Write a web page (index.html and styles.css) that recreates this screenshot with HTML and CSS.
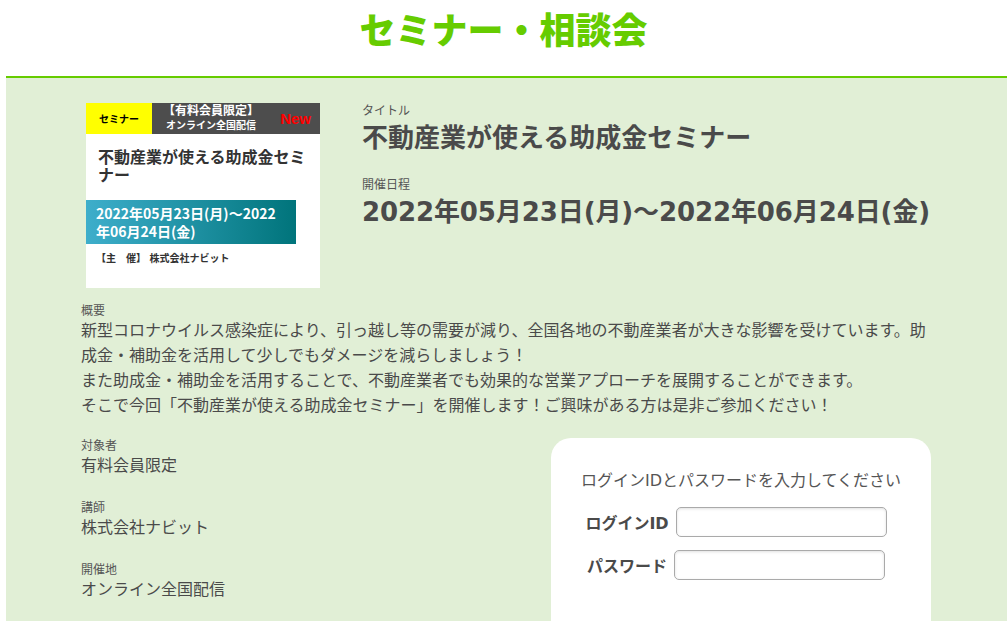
FILE: index.html
```html
<!DOCTYPE html>
<html lang="ja">
  <head>
    <meta charset="UTF-8" />
    <meta name="viewport" content="width=device-width, initial-scale=1.0" />
    <title>セミナー・相談会</title>
    <link rel="stylesheet" href="styles.css">
  </head>
  <body>
    <header class="page-head">
      <h1>セミナー・相談会</h1>
    </header>

    <main class="panel">
      <section class="summary">
        <div class="flyer">
          <div class="flyer-bar">
            <span class="flyer-kind">セミナー</span>
            <div class="flyer-info">
              <div class="flyer-tags">
                <span class="tag-main">【有料会員限定】</span>
                <span class="tag-sub">オンライン全国配信</span>
              </div>
              <span class="flyer-new">New</span>
            </div>
          </div>
          <p class="flyer-title">不動産業が使える助成金セミナー</p>
          <p class="flyer-date">2022年05月23日(月)～2022<br>年06月24日(金)</p>
          <p class="flyer-host">【主　催】 株式会社ナビット</p>
        </div>

        <div class="headline">
          <p class="label">タイトル</p>
          <h2 class="headline-title">不動産業が使える助成金セミナー</h2>
          <p class="label headline-gap">開催日程</p>
          <p class="headline-date">2022年05月23日(月)～2022年06月24日(金)</p>
        </div>
      </section>

      <section class="overview">
        <p class="label">概要</p>
        <p class="overview-text">
          新型コロナウイルス感染症により、引っ越し等の需要が減り、全国各地の不動産業者が大きな影響を受けています。助成金・補助金を活用して少しでもダメージを減らしましょう！<br>
          また助成金・補助金を活用することで、不動産業者でも効果的な営業アプローチを展開することができます。<br>
          そこで今回「不動産業が使える助成金セミナー」を開催します！ご興味がある方は是非ご参加ください！
        </p>
      </section>

      <section class="lower">
        <div class="facts">
          <div class="fact">
            <p class="label">対象者</p>
            <p class="fact-value">有料会員限定</p>
          </div>
          <div class="fact">
            <p class="label">講師</p>
            <p class="fact-value">株式会社ナビット</p>
          </div>
          <div class="fact">
            <p class="label">開催地</p>
            <p class="fact-value">オンライン全国配信</p>
          </div>
        </div>

        <form class="login">
          <p class="login-lead">ログインIDとパスワードを入力してください</p>
          <div class="login-row">
            <label for="login-id">ログインID</label>
            <input class="login-input" id="login-id" type="text" />
          </div>
          <div class="login-row login-row-pass">
            <label for="login-pass">パスワード</label>
            <input class="login-input" id="login-pass" type="password" />
          </div>
        </form>
      </section>
    </main>
  </body>
</html>
```

FILE: styles.css
```css
* {
  box-sizing: border-box;
}

html,
body {
  margin: 0;
  font-family: "DejaVu Sans", "Noto Sans CJK JP", sans-serif;
  color: #4a4a4a;
}

p {
  margin: 0;
}

.page-head {
  height: 76px;
}

.page-head h1 {
  margin: 0;
  text-align: center;
  font-family: "Noto Sans CJK JP", sans-serif;
  font-size: 36px;
  font-weight: 900;
  line-height: 56px;
  color: #66cc00;
}

.panel {
  margin-left: 6px;
  padding: 25px 0 0 75px;
  background-color: #e1efd6;
  border-top: 2px solid #66cc00;
}

.label {
  font-size: 12px;
  line-height: 14px;
  color: #555;
}

/* top: flyer + title */

.summary {
  display: flex;
  gap: 42px;
  padding-left: 5px;
}

.flyer {
  width: 234px;
  height: 185px;
  background-color: #fff;
  color: #333;
}

.flyer-bar {
  display: flex;
  height: 31px;
}

.flyer-kind {
  width: 66px;
  display: flex;
  align-items: center;
  justify-content: center;
  background-color: #ffff00;
  color: #000;
  font-size: 10px;
  font-weight: bold;
}

.flyer-info {
  flex: 1;
  display: flex;
  align-items: center;
  justify-content: space-between;
  padding: 0 9px 0 11px;
  background-color: #4d4d4d;
  color: #fff;
}

.flyer-tags {
  display: flex;
  flex-direction: column;
  align-items: center;
  font-weight: bold;
}

.tag-main {
  font-size: 12px;
  line-height: 15px;
}

.tag-sub {
  font-size: 10px;
  line-height: 14px;
}

.flyer-new {
  font-family: "Liberation Sans", sans-serif;
  color: #ff0000;
  font-size: 15px;
  font-weight: bold;
}

.flyer-title {
  margin-top: 15px;
  padding: 0 12px;
  font-size: 16px;
  font-weight: bold;
  line-height: 18px;
}

.flyer-date {
  width: 210px;
  height: 44px;
  margin-top: 15px;
  padding: 4px 10px 0;
  background: linear-gradient(to right, #3eaecb, #00747b);
  color: #fff;
  font-family: "Noto Sans CJK JP", sans-serif;
  font-size: 14px;
  font-weight: bold;
  line-height: 18px;
  white-space: nowrap;
}

.flyer-host {
  margin-top: 8px;
  padding-left: 10px;
  font-size: 10px;
  font-weight: bold;
  line-height: 14px;
}

.headline {
  padding-top: 1px;
}

.headline-title {
  margin: 2px 0 0;
  font-size: 26px;
  line-height: 36px;
}

.headline-gap {
  margin-top: 22px;
}

.headline-date {
  margin-top: 2px;
  font-size: 26px;
  font-weight: bold;
  line-height: 36px;
  letter-spacing: -0.1px;
}

/* overview */

.overview {
  margin-top: 16px;
}

.overview-text {
  width: 856px;
  font-size: 16px;
  line-height: 25px;
}

/* bottom: facts + login */

.lower {
  display: flex;
  margin-top: 20px;
}

.facts {
  width: 470px;
  padding-top: 1px;
}

.fact + .fact {
  margin-top: 23px;
}

.fact-value {
  font-size: 16px;
  line-height: 25px;
}

.login {
  width: 380px;
  height: 183px;
  margin: 0;
  padding-top: 32px;
  background-color: #fff;
  border-radius: 20px 20px 0 0;
}

.login-lead {
  text-align: center;
  font-size: 16px;
  line-height: 22px;
  color: #555;
}

.login-row {
  display: flex;
  align-items: center;
  justify-content: center;
  gap: 7px;
  margin-top: 15px;
  padding-right: 10px;
}

.login-row-pass {
  margin-top: 13px;
}

.login-row label {
  font-size: 16px;
  font-weight: bold;
  color: #4a4a4a;
}

.login-input {
  width: 211px;
  height: 30px;
  border: 1px solid #aaa;
  border-radius: 5px;
  box-shadow: inset 0 1px 3px rgba(0, 0, 0, 0.12);
  background-color: #fff;
}
```
